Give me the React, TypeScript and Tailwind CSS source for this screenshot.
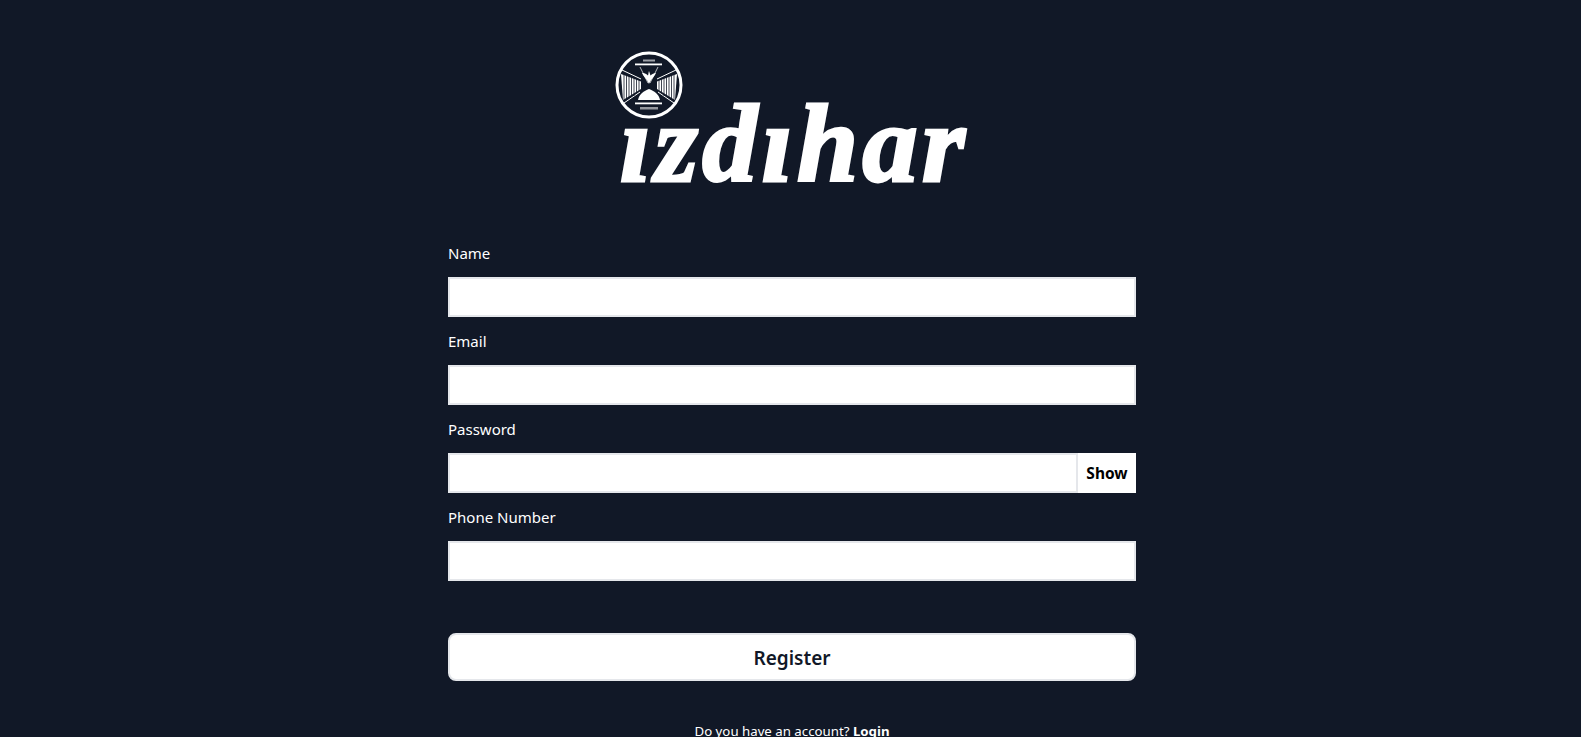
const Field = ({ label }: { label: string }) => (
  <div className="flex flex-col gap-3">
    <label className="pt-px text-[15px] leading-[23px] text-white">{label}</label>
    <input type="text" className="h-10 w-full border-2 border-[#e5e7eb] bg-white px-3 outline-none" />
  </div>
);

const Emblem = () => (
  <svg viewBox="0 0 68 68" className="absolute left-[-1px] top-0 z-10 h-[68px] w-[68px]">
    <circle cx="34" cy="34" r="32" fill="#111827" stroke="white" strokeWidth="3" />
    <rect x="28" y="8.500" width="12" height="2" fill="white" opacity="0.6" />
    <rect x="20" y="12.500" width="27" height="1.800" fill="white" />
    <rect x="20" y="51.500" width="27" height="1.800" fill="white" />
    <rect x="25" y="56" width="18" height="2.500" fill="white" opacity="0.55" />
    {/* hourglass */}
    <path d="M25 16l8 16M43 16l-8 16" stroke="white" strokeWidth="0.7" />
    <path d="M27 22c2 0 4 .5 6 2.500.5-2 .5-3 1-4.500.5 1.500 1 3 1.500 4.500 1.500-1.500 3.500-2.500 5.500-2.500-1.500 3.500-5 6-7 11-1.500-4.500-5.500-7-7-11z" fill="white" />
    <path d="M23 49c1-6 6-9 11-11 5 2 10 5 11 11z" fill="white" />
    {/* colonnades */}
    <path d="M6 23l20 7.500v7.500L8 49z" fill="white" />
    <path d="M62 23l-20 7.500v7.500l18 11z" fill="white" />
    <path d="M7 19l19 9M61 19L42 28M9 52l16-11M59 52L43 41" stroke="white" strokeWidth="1" />
    <g stroke="#111827" strokeWidth="0.8">
      <path d="M9 24v25M11.500 24v24M14 25v22M16.500 26v20M19 27v18M21.500 28v14M24 29v11" />
      <path d="M59 24v25M56.500 24v24M54 25v22M51.500 26v20M49 27v18M46.500 28v14M44 29v11" />
    </g>
  </svg>
);

const Logo = () => (
  <div className="relative h-[136px] w-[360px]">
    <Emblem />
    <span className="absolute bottom-[-12px] left-[4px] whitespace-nowrap font-['Liberation_Serif',serif] text-[110px] font-bold italic leading-none tracking-[4.500px] text-white [-webkit-text-stroke:3px_white]">
      ızdıhar
    </span>
  </div>
);

export default function App() {
  return (
    <div className="h-[737px] overflow-hidden bg-[#111827] font-['Noto_Sans',sans-serif]">
      <div className="ml-[448px] flex w-[688px] flex-col pt-[51px]">
        <div className="ml-[168px]">
          <Logo />
        </div>
        <form className="mt-[54px] flex flex-col gap-3">
          <Field label="Name" />
          <Field label="Email" />
          <div className="flex flex-col gap-3">
            <label className="pt-px text-[15px] leading-[23px] text-white">Password</label>
            <div className="flex h-10 bg-white">
              <input type="password" className="min-w-0 flex-1 border-2 border-[#e5e7eb] bg-white px-3 outline-none" />
              <button type="button" className="w-[58px] pt-0.5 text-center text-[15.5px] font-bold text-black">
                Show
              </button>
            </div>
          </div>
          <Field label="Phone Number" />
          <button
            type="button"
            className="mt-10 h-12 rounded-lg border-2 border-[#e5e7eb] bg-white pt-0.5 text-[19px] font-semibold text-[#111827]"
          >
            Register
          </button>
        </form>
        <p className="mt-10 text-center text-[13.250px] leading-5 text-white">
          Do you have an account? <span className="font-bold">Login</span>
        </p>
      </div>
    </div>
  );
}
